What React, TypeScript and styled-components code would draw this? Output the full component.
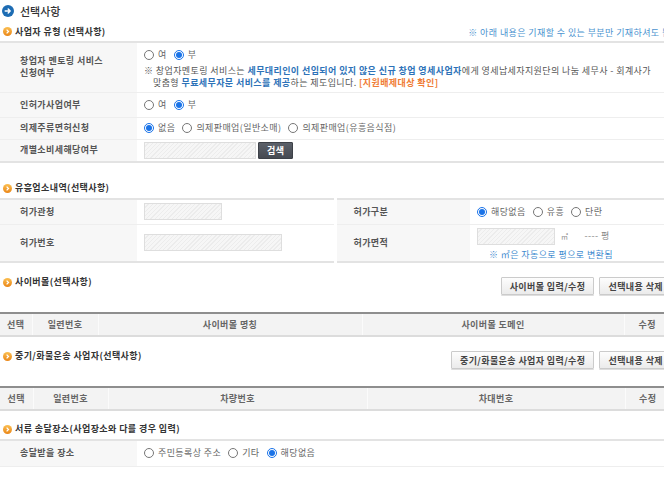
import styled, { createGlobalStyle } from 'styled-components'

const GlobalStyle = createGlobalStyle`
  html, body {
    margin: 0;
    padding: 0;
    background: #fff;
    overflow: hidden;
  }

  body {
    font-family: "Noto Sans CJK KR", "Noto Sans", sans-serif;
    font-size: 9px;
    line-height: 12px;
    letter-spacing: 0.4px;
    color: #555;
  }
`

interface RadioOption {
  label: string
  checked?: boolean
}

function RadioGroup ({ name, options }: { name: string, options: RadioOption[] }): JSX.Element {
  return (
    <RadioRow>
      {options.map((o) => (
        <RadioLabel key={o.label}>
          <RadioInput type='radio' name={name} defaultChecked={o.checked} />
          {o.label}
        </RadioLabel>
      ))}
    </RadioRow>
  )
}

function BlueIcon (): JSX.Element {
  return (
    <svg width='12' height='12' viewBox='0 0 12 12'>
      <circle cx='6' cy='6' r='6' fill='#1d6cb3' />
      <path d='M3.2 6h5M6.2 4l2 2-2 2' stroke='#fff' strokeWidth='1.4' fill='none' strokeLinecap='round' strokeLinejoin='round' />
    </svg>
  )
}

function OrangeIcon (): JSX.Element {
  return (
    <svg width='9' height='9' viewBox='0 0 9 9'>
      <defs>
        <linearGradient id='og' x1='0' y1='0' x2='0' y2='1'>
          <stop offset='0' stopColor='#fbbf52' />
          <stop offset='1' stopColor='#ea8617' />
        </linearGradient>
      </defs>
      <circle cx='4.5' cy='4.5' r='4.5' fill='url(#og)' />
      <path d='M3.6 2.6l1.9 1.9-1.9 1.9' stroke='#fff' strokeWidth='1.3' fill='none' />
    </svg>
  )
}

function SectionTitle ({ children }: { children: React.ReactNode }): JSX.Element {
  return (
    <HeadTitle>
      <OrangeIcon />
      <span>{children}</span>
    </HeadTitle>
  )
}

export default function App (): JSX.Element {
  return (
    <Page>
      <GlobalStyle />
      <PageTitle>
        <BlueIcon />
        <span>선택사항</span>
      </PageTitle>

      <SectionHead $top={0} $height={19}>
        <SectionTitle>사업자 유형 (선택사항)</SectionTitle>
        <TopNote>※ 아래 내용은 기재할 수 있는 부분만 기재하셔도 됩니다</TopNote>
      </SectionHead>
      <FormTable>
        <tbody>
          <tr>
            <LabelCell $h={50}>창업자 멘토링 서비스<br />신청여부</LabelCell>
            <ValueCell $top={6}>
              <RadioGroup name='mentor' options={[{ label: '여' }, { label: '부', checked: true }]} />
              <Notice>
                ※ 창업자멘토링 서비스는 <Em>세무대리인이 선임되어 있지 않은 신규 창업 영세사업자</Em>에게 영세납세자지원단의 나눔 세무사 - 회계사가<br />
                맞춤형 <Em>무료세무자문 서비스를 제공</Em>하는 제도입니다. <Warn>[지원배제대상 확인]</Warn>
              </Notice>
            </ValueCell>
          </tr>
          <tr>
            <LabelCell $h={25}>인허가사업여부</LabelCell>
            <ValueCell>
              <RadioGroup name='permit' options={[{ label: '여' }, { label: '부', checked: true }]} />
            </ValueCell>
          </tr>
          <tr>
            <LabelCell $h={22}>의제주류면허신청</LabelCell>
            <ValueCell>
              <RadioGroup name='liquor' options={[{ label: '없음', checked: true }, { label: '의제판매업(일반소매)' }, { label: '의제판매업(유흥음식점)' }]} />
            </ValueCell>
          </tr>
          <tr>
            <LabelCell $h={23}>개별소비세해당여부</LabelCell>
            <ValueCell>
              <InlineRow>
                <HatchInput $w={112} />
                <DarkButton>검색</DarkButton>
              </InlineRow>
            </ValueCell>
          </tr>
        </tbody>
      </FormTable>

      <SectionHead $top={15} $height={20}>
        <SectionTitle>유흥업소내역(선택사항)</SectionTitle>
      </SectionHead>
      <FormTable>
        <colgroup>
          <col style={{ width: 137 }} />
          <col style={{ width: 198 }} />
          <col style={{ width: 135 }} />
          <col />
        </colgroup>
        <tbody>
          <tr>
            <LabelCell $h={25}>허가관청</LabelCell>
            <ValueCell>
              <HatchInput $w={78} />
            </ValueCell>
            <LabelCell $side>허가구분</LabelCell>
            <ValueCell>
              <RadioGroup name='kind' options={[{ label: '해당없음', checked: true }, { label: '유흥' }, { label: '단란' }]} />
            </ValueCell>
          </tr>
          <tr>
            <LabelCell $h={38}>허가번호</LabelCell>
            <ValueCell>
              <HatchInput $w={138} />
            </ValueCell>
            <LabelCell $side>허가면적</LabelCell>
            <ValueCell $top={3}>
              <InlineRow>
                <HatchInput $w={78} />
                <Unit>㎡</Unit>
                <Pyeong>---- 평</Pyeong>
              </InlineRow>
              <AreaNote>※ ㎡은 자동으로 평으로 변환됨</AreaNote>
            </ValueCell>
          </tr>
        </tbody>
      </FormTable>

      <SectionHead $top={14} $height={18} $after={17}>
        <SectionTitle>사이버몰(선택사항)</SectionTitle>
        <ButtonBar>
          <GrayButton>사이버몰 입력/수정</GrayButton>
          <GrayButton>선택내용 삭제</GrayButton>
        </ButtonBar>
      </SectionHead>
      <ListTable>
        <colgroup>
          <col style={{ width: 32 }} />
          <col style={{ width: 66 }} />
          <col style={{ width: 264 }} />
          <col style={{ width: 262 }} />
          <col />
        </colgroup>
        <thead>
          <tr>
            <HeadCell>선택</HeadCell>
            <HeadCell>일련번호</HeadCell>
            <HeadCell>사이버몰 명칭</HeadCell>
            <HeadCell>사이버몰 도메인</HeadCell>
            <HeadCell>수정</HeadCell>
          </tr>
        </thead>
      </ListTable>

      <SectionHead $top={14} $height={18} $after={17}>
        <SectionTitle>중기/화물운송 사업자(선택사항)</SectionTitle>
        <ButtonBar>
          <GrayButton>중기/화물운송 사업자 입력/수정</GrayButton>
          <GrayButton>선택내용 삭제</GrayButton>
        </ButtonBar>
      </SectionHead>
      <ListTable>
        <colgroup>
          <col style={{ width: 33 }} />
          <col style={{ width: 75 }} />
          <col style={{ width: 259 }} />
          <col style={{ width: 258 }} />
          <col />
        </colgroup>
        <thead>
          <tr>
            <HeadCell>선택</HeadCell>
            <HeadCell>일련번호</HeadCell>
            <HeadCell>차량번호</HeadCell>
            <HeadCell>차대번호</HeadCell>
            <HeadCell>수정</HeadCell>
          </tr>
        </thead>
      </ListTable>

      <SectionHead $top={8} $height={20}>
        <SectionTitle>서류 송달장소(사업장소와 다를 경우 입력)</SectionTitle>
      </SectionHead>
      <FormTable $plain>
        <tbody>
          <tr>
            <LabelCell $h={26}>송달받을 장소</LabelCell>
            <ValueCell>
              <RadioGroup name='delivery' options={[{ label: '주민등록상 주소' }, { label: '기타' }, { label: '해당없음', checked: true }]} />
            </ValueCell>
          </tr>
        </tbody>
      </FormTable>
    </Page>
  )
}

const Page = styled.div`
  width: 670px;
`

const PageTitle = styled.div`
  display: flex;
  align-items: center;
  gap: 6px;

  height: 22px;
  padding-left: 2px;

  font-size: 11px;
  font-weight: 500;
  letter-spacing: 0;
  color: #333;
`

const SectionHead = styled.div<{ $top: number, $height: number, $after?: number }>`
  display: flex;
  justify-content: space-between;
  align-items: ${({ $after }) => ($after ? 'flex-start' : 'center')};

  height: ${({ $height }) => $height}px;
  margin-top: ${({ $top }) => $top}px;
  margin-bottom: ${({ $after }) => $after ?? 0}px;
`

const HeadTitle = styled.div`
  display: flex;
  align-items: center;
  gap: 3px;

  padding-left: 3px;
  line-height: 10px;

  font-weight: 700;
  color: #333;
  white-space: nowrap;
`

const TopNote = styled.div`
  margin-right: -18px;
  padding-top: 2px;

  color: #4b93cf;
  white-space: nowrap;
`

const FormTable = styled.table<{ $plain?: boolean }>`
  width: 100%;
  border-collapse: collapse;
  table-layout: fixed;

  border-top: 2px solid #e3e3e3;
  border-bottom: ${({ $plain }) => ($plain ? 'none' : '2px solid #e3e3e3')};
`

const LabelCell = styled.th<{ $h?: number, $side?: boolean }>`
  width: 137px;
  height: ${({ $h }) => ($h ? `${$h}px` : 'auto')};
  padding: 0 0 0 ${({ $side }) => ($side ? 17 : 20)}px;
  box-sizing: border-box;

  border-bottom: 1px solid #eeeeee;
  border-left: ${({ $side }) => ($side ? '3px solid #fff' : 'none')};
  background: #f7f7f7;

  text-align: left;
  vertical-align: middle;
  font-weight: 700;
  line-height: 12px;
  color: #555;
`

const ValueCell = styled.td<{ $top?: number }>`
  padding: ${({ $top }) => ($top ? `${$top}px 0 0 7px` : '0 0 0 7px')};

  border-bottom: 1px solid #eeeeee;
  vertical-align: ${({ $top }) => ($top ? 'top' : 'middle')};
  color: #666;
`

const RadioRow = styled.div`
  display: flex;
  align-items: center;
  gap: 7px;

  height: 12px;
  white-space: nowrap;
`

const RadioLabel = styled.label`
  display: flex;
  align-items: center;
  gap: 4px;
`

const RadioInput = styled.input`
  width: 10px;
  height: 10px;
  margin: 0;

  accent-color: #1a73e8;
`

const Notice = styled.p`
  margin: 4px 0 0;
  padding-left: 9px;

  text-indent: -9px;
  line-height: 12px;
  color: #555;
  white-space: nowrap;
`

const Em = styled.b`
  color: #2d72b8;
`

const Warn = styled.b`
  color: #f07c35;
`

const InlineRow = styled.div`
  display: flex;
  align-items: center;
  gap: 2px;
`

const HatchInput = styled.div<{ $w: number }>`
  width: ${({ $w }) => $w}px;
  height: 17px;
  box-sizing: border-box;

  border: 1px solid #dedede;
  background: repeating-linear-gradient(135deg, #f6f6f6 0 2px, #ececec 2px 3px);
`

const DarkButton = styled.button`
  height: 17px;
  padding: 0 8px;

  border: 1px solid #3d4148;
  border-radius: 1px;
  background: linear-gradient(#5b6069, #464a52);

  font-family: inherit;
  font-size: 9px;
  font-weight: 700;
  letter-spacing: 0.4px;
  color: #fff;
`

const Unit = styled.span`
  margin-left: 4px;

  font-size: 7px;
  color: #888;
`

const Pyeong = styled.span`
  margin-left: 14px;

  color: #888;
`

const AreaNote = styled.div`
  margin-top: 4px;
  padding-left: 12px;

  color: #3f8ccf;
  white-space: nowrap;
`

const ButtonBar = styled.div`
  display: flex;
  gap: 5px;
  margin-right: -2px;
`

const GrayButton = styled.button`
  height: 18px;
  padding: 0 8px;

  border: 1px solid #cbcbcb;
  border-radius: 1px;
  background: linear-gradient(#fdfdfd, #ebebeb);
  box-shadow: 0 1px 0 #dedede;

  font-family: inherit;
  font-size: 9px;
  font-weight: 700;
  letter-spacing: 0.4px;
  color: #444;
  white-space: nowrap;
`

const ListTable = styled.table`
  width: 100%;
  border-collapse: collapse;
  table-layout: fixed;

  border-top: 2px solid #8e8e8e;
  border-bottom: 2px solid #dcdcdc;
`

const HeadCell = styled.th`
  height: 21px;
  padding: 0;

  border-left: 1px solid #fbfbfb;
  background: #f3f3f3;

  font-weight: 700;
  color: #666;
  text-align: center;

  &:first-child {
    border-left: none;
  }
`
